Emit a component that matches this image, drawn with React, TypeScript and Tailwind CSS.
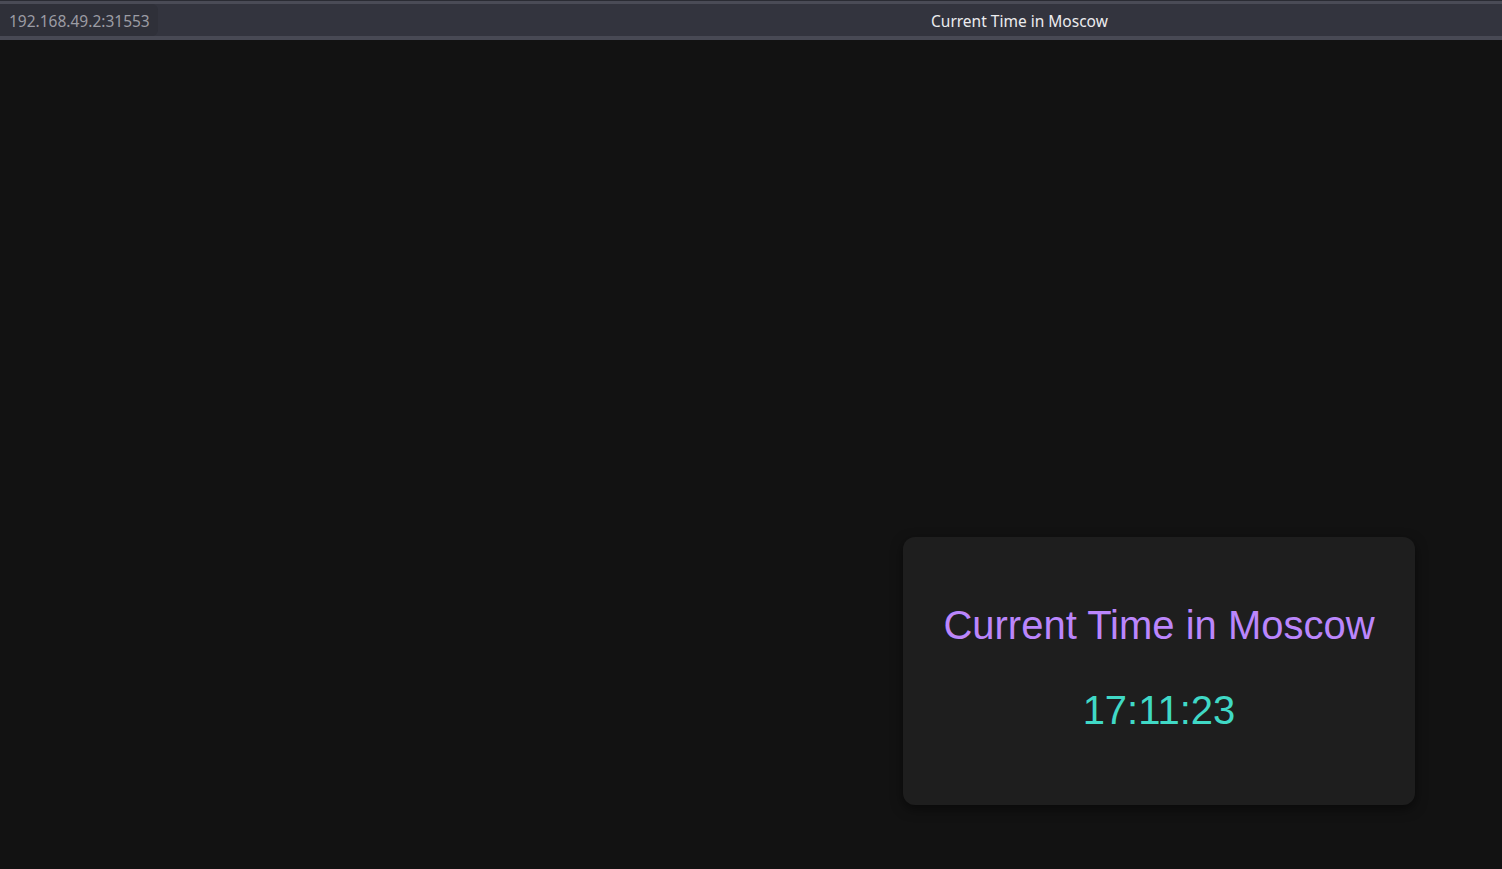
export default function App() {
  const title = "Current Time in Moscow";
  const time = "17:11:23";

  return (
    <div className="flex h-[869px] w-full flex-col bg-[#121212]">
      {/* window title bar */}
      <div className="flex h-10 shrink-0 flex-col bg-[#33343e]">
        <div className="h-px bg-[#2a2b33]" />
        <div className="h-[3px] bg-[#4a4b56]" />
        <div className="flex flex-1 items-center font-['Noto_Sans',sans-serif] text-[15.5px]">
          <div className="flex h-full w-[158px] items-center rounded-r-md bg-[#2f3039] pt-[3px] pl-[9px] text-[#9c9ca4]">
            192.168.49.2:31553
          </div>
          <div className="ml-[773px] pt-[3px] text-[#ececef]">{title}</div>
        </div>
        <div className="h-1 bg-[#484954]" />
      </div>

      {/* page */}
      <div className="flex flex-1 items-end justify-end pr-[87px] pb-[64px]">
        <div className="flex w-[512px] flex-col items-center gap-[39px] rounded-xl bg-[#1e1e1e] pt-[65px] pb-[72px] font-['Liberation_Sans',Arial,sans-serif] text-[40px] leading-[46px] shadow-[0_4px_12px_rgba(0,0,0,0.5)]">
          <h1 className="text-[#bb86fc]">{title}</h1>
          <div className="text-[#40d9c6]">{time}</div>
        </div>
      </div>
    </div>
  );
}
